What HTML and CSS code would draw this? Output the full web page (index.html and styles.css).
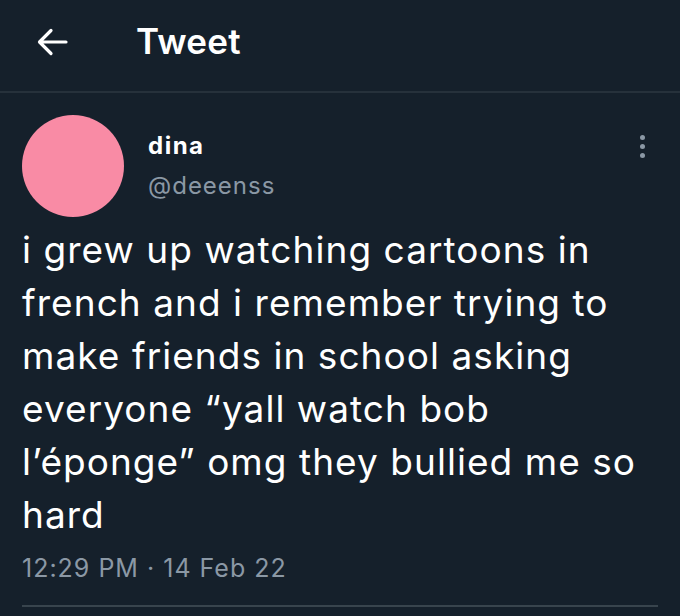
FILE: index.html
```html
<!DOCTYPE html>
<html lang="en">
<head>
<meta charset="utf-8">
<title>Tweet</title>
<link rel="stylesheet" href="styles.css">
</head>
<body>
<div class="page">
  <header class="topbar">
    <svg class="back" width="32" height="28" viewBox="0 0 32 28" aria-hidden="true">
      <path d="M30 14H4M15 2.5L3.5 14L15 25.5" fill="none" stroke="#ffffff" stroke-width="3.2" stroke-linecap="round" stroke-linejoin="round"/>
    </svg>
    <h1 class="title">Tweet</h1>
  </header>
  <main class="tweet">
    <div class="author">
      <div class="avatar"></div>
      <div class="names">
        <div class="name">dina</div>
        <div class="handle">@deeenss</div>
      </div>
      <div class="more" aria-label="More">
        <span class="dot"></span><span class="dot"></span><span class="dot"></span>
      </div>
    </div>
    <p class="text">i grew up watching cartoons in<br>french and i remember trying to<br>make friends in school asking<br>everyone “yall watch bob<br>l’éponge” omg they bullied me so<br>hard</p>
    <div class="meta">12:29 PM · 14 Feb 22</div>
    <div class="rule"></div>
  </main>
</div>
</body>
</html>
```

FILE: styles.css
```css
* { box-sizing: border-box; }
html, body { margin: 0; padding: 0; }
body {
  background: #15202b;
  color: #ffffff;
  font-family: "Inter", "Roboto", "Liberation Sans", sans-serif;
  width: 680px;
  height: 616px;
  overflow: hidden;
}
.topbar {
  height: 93px;
  display: flex;
  align-items: center;
  padding-left: 36px;
  padding-bottom: 8px;
  border-bottom: 2px solid #26313b;
}
.back { display: block; }
.title {
  margin: 0 0 0 68px;
  font-size: 35px;
  font-weight: 600;
  letter-spacing: 0.3px;
  line-height: 1;
}
.tweet {
  padding: 0 22px;
}
.author {
  display: flex;
  align-items: flex-start;
  padding-top: 22px;
}
.avatar {
  width: 102px;
  height: 102px;
  border-radius: 50%;
  background: #f98ba5;
  flex: none;
}
.names {
  margin-left: 24px;
  padding-top: 16px;
  flex: 1;
}
.name {
  font-size: 24px;
  font-weight: 700;
  line-height: 30px;
  letter-spacing: 1.5px;
}
.handle {
  margin-top: 10px;
  font-size: 24px;
  color: #8b98a5;
  line-height: 30px;
  letter-spacing: 1px;
}
.more {
  display: flex;
  flex-direction: column;
  gap: 4px;
  margin-top: 20px;
  margin-right: 13px;
}
.dot {
  width: 5px;
  height: 5px;
  border-radius: 50%;
  background: #8b98a5;
}
.text {
  margin: 6px 0 0;
  font-size: 37px;
  line-height: 53px;
  font-weight: 400;
  letter-spacing: 1.05px;
  white-space: nowrap;
}
.meta {
  margin-top: 10px;
  font-size: 25px;
  line-height: 34px;
  color: #8b98a5;
  letter-spacing: 1px;
}
.rule {
  margin-top: 20px;
  height: 2px;
  background: #38444d;
}
```
